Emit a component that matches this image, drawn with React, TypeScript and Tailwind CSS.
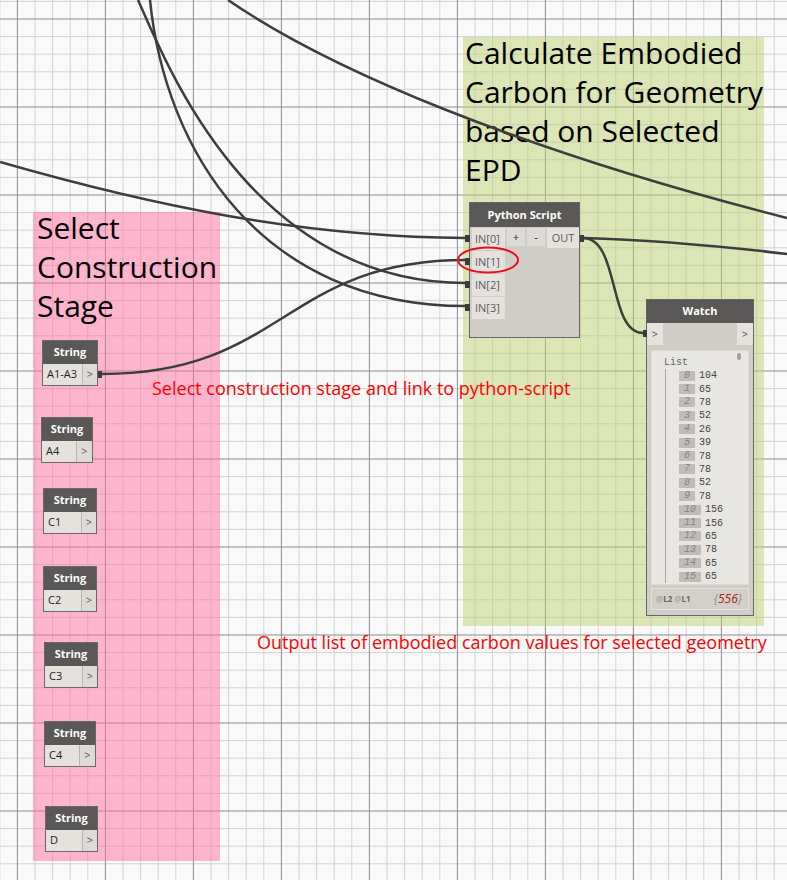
import React from "react";

const STEP = 17.6;

const stringNodes = [
  { x: 42, y: 340, w: 56, vw: 39, value: "A1-A3", linked: true },
  { x: 41, y: 417, w: 52, vw: 34, value: "A4" },
  { x: 43, y: 488, w: 54, vw: 37, value: "C1" },
  { x: 43, y: 566, w: 54, vw: 37, value: "C2" },
  { x: 44, y: 642, w: 54, vw: 37, value: "C3" },
  { x: 44, y: 721, w: 52, vw: 34, value: "C4" },
  { x: 45, y: 806, w: 53, vw: 36, value: "D" },
];

const watchValues = [104, 65, 78, 52, 26, 39, 78, 78, 52, 78, 156, 156, 65, 78, 65, 65];

function Grid() {
  const xs = Array.from({ length: 47 }, (_, i) => ({ v: 17.4 + STEP * (i - 1), major: (i - 1) % 5 === 0 }));
  const ys = Array.from({ length: 52 }, (_, i) => ({ v: 19 + STEP * (i - 1), major: (i - 1) % 5 === 0 }));
  return (
    <svg className="absolute inset-0" width={787} height={880}>
      {xs.filter((l) => !l.major).map((l) => (
        <line key={"mx" + l.v} x1={l.v} x2={l.v} y1={0} y2={880} stroke="#d2d2d2" strokeWidth={1} />
      ))}
      {ys.filter((l) => !l.major).map((l) => (
        <line key={"my" + l.v} y1={l.v} y2={l.v} x1={0} x2={787} stroke="#d2d2d2" strokeWidth={1} />
      ))}
      {xs.filter((l) => l.major).map((l) => (
        <line key={"Mx" + l.v} x1={l.v} x2={l.v} y1={0} y2={880} stroke="#8c8c8c" strokeWidth={1} />
      ))}
      {ys.filter((l) => l.major).map((l) => (
        <line key={"My" + l.v} y1={l.v} y2={l.v} x1={0} x2={787} stroke="#8c8c8c" strokeWidth={1} />
      ))}
    </svg>
  );
}

function Wires() {
  const paths = [
    "M 228 0 C 330 70, 520 150, 787 218",
    "M 0 162 C 150 205, 300 237, 466 238",
    "M 138 0 C 165 60, 250 283, 466 283",
    "M 150 0 C 165 150, 260 306, 466 306",
    "M 102 374 C 284 374, 284 260, 466 260",
    "M 583 238 C 650 240, 720 246, 787 254",
    "M 583 238 C 620 238, 608 333, 643 333",
  ];
  return (
    <svg className="absolute inset-0" width={787} height={880}>
      {paths.map((d) => (
        <path key={d} d={d} fill="none" stroke="#3d3d3d" strokeWidth={2.5} />
      ))}
    </svg>
  );
}

function StringNode({ x, y, w, vw, value, linked }: { x: number; y: number; w: number; vw: number; value: string; linked?: boolean }) {
  return (
    <div className="absolute border border-[#6a6866] bg-[#d0ccc6]" style={{ left: x, top: y, width: w }}>
      <div className="h-[23px] bg-[#5a5856] text-white text-[11px] font-bold flex items-center justify-center">String</div>
      <div className="relative flex h-[21px]">
        <div className="bg-[#e5e2de] flex items-center pl-[4px] text-[11px] text-[#222]" style={{ width: vw }}>
          {value}
        </div>
        <div className="flex-1 flex items-center justify-center border-l border-[#b9b5af] bg-[#dedbd6] text-[11px] text-[#555]">&gt;</div>
        {linked && <div className="absolute right-[-5px] top-[7px] w-[4px] h-[7px] bg-[#3b3b3b]" />}
      </div>
    </div>
  );
}

function PythonNode() {
  return (
    <div className="absolute left-[469px] top-[202px] w-[111px] h-[136px] border border-[#676563] bg-[#d0ccc6]">
      <div className="h-[24px] bg-[#5a5856] text-white text-[11px] font-bold flex items-center justify-center">Python Script</div>
      <div className="flex pt-px">
        <div className="flex flex-col gap-px ml-[2px]">
          {["IN[0]", "IN[1]", "IN[2]", "IN[3]"].map((p) => (
            <div key={p} className="relative w-[33px] h-[22px] bg-[#e5e2de] flex items-center pl-[3px] text-[11px] text-[#5a5a5a]">
              {p}
              <div className="absolute left-[-7px] top-[7px] w-[5px] h-[7px] bg-[#3b3b3b]" />
            </div>
          ))}
        </div>
        <div className="flex gap-[2px] ml-[2px]">
          <div className="w-[18px] h-[18px] bg-[#dedbd6] flex items-center justify-center text-[11px] text-[#222]">+</div>
          <div className="w-[18px] h-[18px] bg-[#dedbd6] flex items-center justify-center text-[11px] text-[#222]">-</div>
        </div>
        <div className="relative ml-auto w-[32px] h-[20px] bg-[#e5e2de] flex items-center justify-center text-[11px] text-[#5a5a5a]">
          OUT
          <div className="absolute right-[-5px] top-[7px] w-[4px] h-[7px] bg-[#3b3b3b]" />
        </div>
      </div>
    </div>
  );
}

function WatchNode() {
  return (
    <div className="absolute left-[646px] top-[299px] w-[108px] h-[317px] border border-[#676563] bg-[#d0ccc6]">
      <div className="h-[23px] bg-[#5a5856] text-white text-[11px] font-bold flex items-center justify-center">Watch</div>
      <div className="relative flex justify-between h-[22px]">
        <div className="w-[16px] bg-[#e5e2de] flex items-center justify-center text-[11px] text-[#555]">&gt;</div>
        <div className="w-[16px] bg-[#e5e2de] flex items-center justify-center text-[11px] text-[#555]">&gt;</div>
        <div className="absolute left-[-4px] top-[7px] w-[4px] h-[7px] bg-[#3b3b3b]" />
      </div>
      <div className="relative mx-[4px] mt-[5px] h-[235px] bg-[#e8e6e2] border border-[#dcd9d4] font-['Liberation_Mono',monospace]">
        <div className="absolute right-[7px] top-[2px] w-[4px] h-[7px] rounded-full bg-[#a3a3a3]" />
        <div className="pl-[12px] pt-[6px] text-[10px] leading-[12px] text-[#666]">List</div>
        <div className="ml-[13px] border-l border-[#a8a8a8] pl-[13px]">
          {watchValues.map((v, i) => (
            <div key={i} className="h-[13.4px] flex items-center text-[10px]">
              <span className="h-[10px] px-[5px] bg-[#c0bdb8] italic text-[#858585] leading-[10px]">{i}</span>
              <span className="ml-[4px] text-[#444]">{v}</span>
            </div>
          ))}
        </div>
      </div>
      <div className="mx-[4px] mt-[3px] h-[22px] bg-[#d3d0ca] border border-[#e3e0db] flex items-center justify-between pl-[4px] pr-[6px]">
        <span className="text-[8px] font-bold text-[#666]">
          <span className="text-[#aaa]">@</span>L2 <span className="text-[#aaa]">@</span>L1
        </span>
        <span className="text-[12px] italic">
          <span className="text-[#8090a8]">{"{"}</span>
          <span className="text-[#b01515]">556</span>
          <span className="text-[#8090a8]">{"}"}</span>
        </span>
      </div>
    </div>
  );
}

export default function App() {
  return (
    <div className="relative w-[787px] h-[880px] overflow-hidden bg-[#f9f9f9] font-['Open_Sans',sans-serif]">
      <Grid />

      {/* groups */}
      <div className="absolute left-[33px] top-[212px] w-[187px] h-[649px] bg-[#ff71a1]/50">
        <div className="-mt-[4px] pl-[4px] text-[30px] leading-[39px] text-black whitespace-nowrap">
          Select
          <br />
          Construction
          <br />
          Stage
        </div>
      </div>
      <div className="absolute left-[463px] top-[37px] w-[301px] h-[589px] bg-[#bdd173]/50">
        <div className="-mt-[4px] pl-[2px] text-[30px] leading-[39px] text-black whitespace-nowrap">
          Calculate Embodied
          <br />
          Carbon for Geometry
          <br />
          based on Selected
          <br />
          EPD
        </div>
      </div>

      <Wires />

      {stringNodes.map((n) => (
        <StringNode key={n.value} {...n} />
      ))}
      <PythonNode />
      <WatchNode />

      <div className="absolute left-[152px] top-[379px] text-[18px] leading-none text-[#ff0000] whitespace-nowrap">
        Select construction stage and link to python-script
      </div>
      <div className="absolute left-[257px] top-[633px] text-[18px] leading-none text-[#ff0000] whitespace-nowrap">
        Output list of embodied carbon values for selected geometry
      </div>

      <svg className="absolute inset-0 pointer-events-none" width={787} height={880}>
        <ellipse cx={488} cy={260} rx={30} ry={12.5} fill="none" stroke="#e8101a" strokeWidth={2} />
      </svg>
    </div>
  );
}
